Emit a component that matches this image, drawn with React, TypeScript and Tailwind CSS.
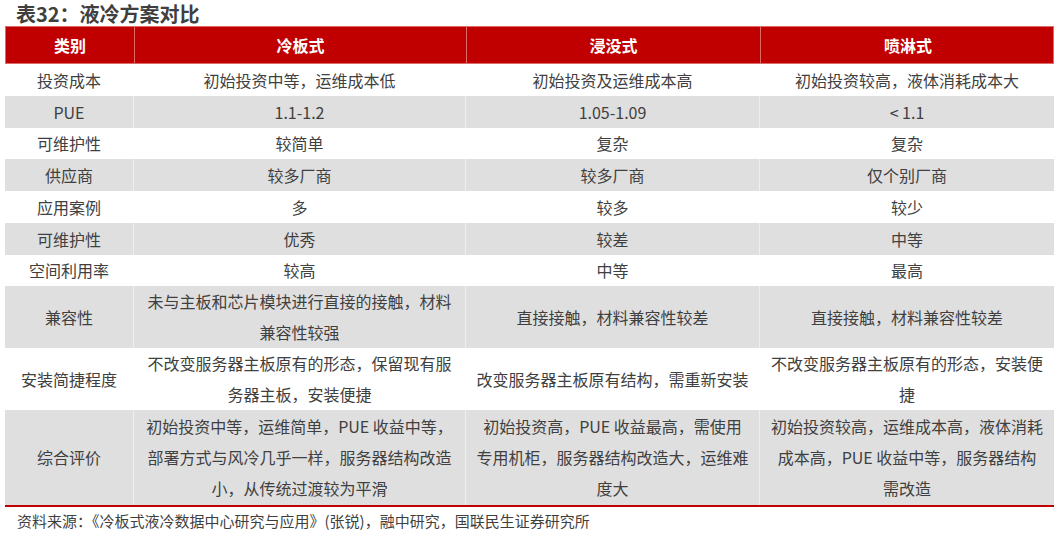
import React from "react";

type Row = { h: string; grey: boolean; cells: string[][] };

const rows: Row[] = [
  { h: "h-[32px]", grey: false, cells: [["投资成本"], ["初始投资中等，运维成本低"], ["初始投资及运维成本高"], ["初始投资较高，液体消耗成本大"]] },
  { h: "h-[32px]", grey: true, cells: [["PUE"], ["1.1-1.2"], ["1.05-1.09"], ["< 1.1"]] },
  { h: "h-[31px]", grey: false, cells: [["可维护性"], ["较简单"], ["复杂"], ["复杂"]] },
  { h: "h-[32px]", grey: true, cells: [["供应商"], ["较多厂商"], ["较多厂商"], ["仅个别厂商"]] },
  { h: "h-[32px]", grey: false, cells: [["应用案例"], ["多"], ["较多"], ["较少"]] },
  { h: "h-[32px]", grey: true, cells: [["可维护性"], ["优秀"], ["较差"], ["中等"]] },
  { h: "h-[31px]", grey: false, cells: [["空间利用率"], ["较高"], ["中等"], ["最高"]] },
  {
    h: "h-[62px]",
    grey: true,
    cells: [["兼容性"], ["未与主板和芯片模块进行直接的接触，材料", "兼容性较强"], ["直接接触，材料兼容性较差"], ["直接接触，材料兼容性较差"]],
  },
  {
    h: "h-[62px]",
    grey: false,
    cells: [
      ["安装简捷程度"],
      ["不改变服务器主板原有的形态，保留现有服", "务器主板，安装便捷"],
      ["改变服务器主板原有结构，需重新安装"],
      ["不改变服务器主板原有的形态，安装便", "捷"],
    ],
  },
  {
    h: "h-[95px]",
    grey: true,
    cells: [
      ["综合评价"],
      ["初始投资中等，运维简单，PUE 收益中等，", "部署方式与风冷几乎一样，服务器结构改造", "小，从传统过渡较为平滑"],
      ["初始投资高，PUE 收益最高，需使用", "专用机柜，服务器结构改造大，运维难", "度大"],
      ["初始投资较高，运维成本高，液体消耗", "成本高，PUE 收益中等，服务器结构", "需改造"],
    ],
  },
];

const cols = "grid grid-cols-[128px_332px_294px_295px]";

export default function App() {
  return (
    <div
      className="w-[1059px] h-[533px] bg-white text-[#404040] overflow-hidden"
      style={{ fontFamily: '"Noto Sans CJK SC", "Noto Sans", sans-serif' }}
    >
      <div className="h-[26px] pl-[16px] pt-[1px] text-[20px] leading-[25px] font-bold text-[#3f3f3f]">
        表32：液冷方案对比
      </div>
      <div className="ml-[5px] w-[1049px]">
        <div className={`${cols} h-[38px] bg-[#c00000] border border-[#e06a6a] text-white font-bold text-[16px]`}>
          {["类别", "冷板式", "浸没式", "喷淋式"].map((t, i) => (
            <div
              key={t}
              className={`flex items-center justify-center ${i > 0 ? "border-l border-[#e06a6a]" : ""}`}
            >
              {t}
            </div>
          ))}
        </div>
        {rows.map((r, ri) => (
          <div key={ri} className={`${cols} ${r.h} ${r.grey ? "bg-[#dfdfdf]" : "bg-white"} text-[16px]`}>
            {r.cells.map((lines, ci) => (
              <div
                key={ci}
                className={`flex flex-col items-center justify-center text-center leading-[31px] whitespace-nowrap ${
                  ci > 0 ? (r.grey ? "border-l border-[#efefef]" : "border-l border-white") : ""
                }`}
              >
                {lines.map((l, li) => (
                  <span key={li}>{l}</span>
                ))}
              </div>
            ))}
          </div>
        ))}
        <div className="h-[2px] bg-[#c00000]" />
      </div>
      <div className="pl-[17px] pt-[1px] text-[15px] leading-[25px] text-[#3f3f3f]">
        资料来源：《冷板式液冷数据中心研究与应用》(张锐)，融中研究，国联民生证券研究所
      </div>
    </div>
  );
}
